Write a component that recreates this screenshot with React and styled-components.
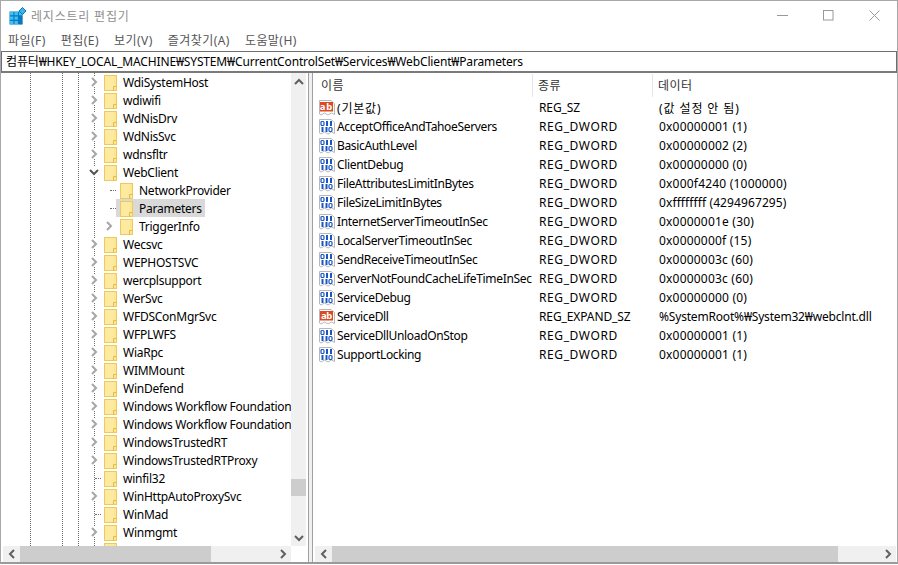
import styled, { createGlobalStyle } from "styled-components";

const GlobalStyle = createGlobalStyle`
  html, body {
    margin: 0;
    padding: 0;
    background: #fff;
    overflow: hidden;
  }
`;

const treeItems = [
  { name: "WdiSystemHost" },
  { name: "wdiwifi" },
  { name: "WdNisDrv" },
  { name: "WdNisSvc" },
  { name: "wdnsfltr" },
  { name: "WebClient", open: true },
  { name: "NetworkProvider", child: true, leaf: true },
  { name: "Parameters", child: true, leaf: true, selected: true },
  { name: "TriggerInfo", child: true },
  { name: "Wecsvc" },
  { name: "WEPHOSTSVC" },
  { name: "wercplsupport" },
  { name: "WerSvc" },
  { name: "WFDSConMgrSvc" },
  { name: "WFPLWFS" },
  { name: "WiaRpc" },
  { name: "WIMMount" },
  { name: "WinDefend" },
  { name: "Windows Workflow Foundation" },
  { name: "Windows Workflow Foundation" },
  { name: "WindowsTrustedRT" },
  { name: "WindowsTrustedRTProxy" },
  { name: "winfil32", leaf: true },
  { name: "WinHttpAutoProxySvc" },
  { name: "WinMad", leaf: true },
  { name: "Winmgmt" },
  { name: "" },
];

// kind, name, type, data, letter spacing of the data column
const values = [
  ["sz", "(기본값)", "REG_SZ", "(값 설정 안 됨)", 0.9],
  ["dword", "AcceptOfficeAndTahoeServers", "REG_DWORD", "0x00000001 (1)", 0.2],
  ["dword", "BasicAuthLevel", "REG_DWORD", "0x00000002 (2)", 0.2],
  ["dword", "ClientDebug", "REG_DWORD", "0x00000000 (0)", 0.2],
  ["dword", "FileAttributesLimitInBytes", "REG_DWORD", "0x000f4240 (1000000)", 0.2],
  ["dword", "FileSizeLimitInBytes", "REG_DWORD", "0xffffffff (4294967295)", 0.1],
  ["dword", "InternetServerTimeoutInSec", "REG_DWORD", "0x0000001e (30)", 0.2],
  ["dword", "LocalServerTimeoutInSec", "REG_DWORD", "0x0000000f (15)", 0.2],
  ["dword", "SendReceiveTimeoutInSec", "REG_DWORD", "0x0000003c (60)", 0.2],
  ["dword", "ServerNotFoundCacheLifeTimeInSec", "REG_DWORD", "0x0000003c (60)", 0.2],
  ["dword", "ServiceDebug", "REG_DWORD", "0x00000000 (0)", 0.2],
  ["sz", "ServiceDll", "REG_EXPAND_SZ", "%SystemRoot%₩System32₩webclnt.dll", -0.18],
  ["dword", "ServiceDllUnloadOnStop", "REG_DWORD", "0x00000001 (1)", 0.2],
  ["dword", "SupportLocking", "REG_DWORD", "0x00000001 (1)", 0.2],
];

const menus = ["파일(F)", "편집(E)", "보기(V)", "즐겨찾기(A)", "도움말(H)"];

const Chevron = ({ dir = "right", color = "#a6a6a6", size = 10 }) => {
  const points = {
    right: "3,1 7,5 3,9",
    left: "7,1 3,5 7,9",
    up: "1,7 5,3 9,7",
    down: "1,3 5,7 9,3",
  };
  return (
    <svg width={size} height={size} viewBox="0 0 10 10" fill="none">
      <polyline points={points[dir]} stroke={color} strokeWidth="2" />
    </svg>
  );
};

const Folder = () => (
  <svg width="13" height="16" viewBox="0 0 13 16">
    <rect x="0.5" y="0.5" width="12" height="15" fill="#fde68f" stroke="#ecca5c" />
    <rect x="1" y="1" width="9" height="14" fill="#fdeaa0" />
    <path d="M9.5 15.5V11.5H12.5" fill="none" stroke="#e5bd45" />
  </svg>
);

const AppIcon = () => (
  <svg width="18" height="18" viewBox="0 0 18 18">
    <rect x="0.5" y="4.5" width="13" height="13" fill="#0a78bd" />
    {[1, 5.5, 10].map((x) =>
      [5, 9.5, 14].map((y) => (
        <rect key={`${x}-${y}`} x={x} y={y} width="3.4" height="3.2" fill={x > 9 && y > 9 ? "#0a78bd" : "#3cc2f5"} />
      ))
    )}
    <path d="M13.5 0.5 L17 4 L13.5 7.5 L10 4 Z" fill="#3cb4ea" stroke="#0a78bd" />
  </svg>
);

const PageShape = () => (
  <path d="M0.5 0.5H12L15.5 3.5V14.5L12.5 13L9 15L5.5 13L2 15L0.5 14Z" fill="#fff" stroke="#b8b8b8" />
);

const StringIcon = () => (
  <svg width="16" height="16" viewBox="0 0 16 16">
    <PageShape />
    <rect x="1" y="2" width="13" height="9.5" fill="#dc4a24" />
    <text x="7.5" y="10" textAnchor="middle" fontFamily="Noto Sans, sans-serif" fontSize="9.5" fontWeight="700" fill="#fff">
      ab
    </text>
  </svg>
);

const Bit = ({ x, y, one }) =>
  one ? (
    <rect x={x + 0.5} y={y} width="2" height="5" fill="#1a55c4" />
  ) : (
    <rect x={x} y={y + 0.5} width="3" height="4" rx="1" fill="none" stroke="#1a55c4" strokeWidth="1.2" />
  );

const BinaryIcon = () => (
  <svg width="16" height="16" viewBox="0 0 16 16">
    <PageShape />
    <Bit x={2} y={2} />
    <Bit x={6.5} y={2} one />
    <Bit x={10.5} y={2} one />
    <Bit x={2} y={8} one />
    <Bit x={6} y={8} one />
    <Bit x={10} y={8} />
  </svg>
);

const App = () => (
  <>
    <GlobalStyle />
    <Window>
      <TitleBar>
        <AppIcon />
        <Title>레지스트리 편집기</Title>
        <WindowButtons>
          <WindowButton>
            <svg width="11" height="11" viewBox="0 0 11 11">
              <path d="M0 5.5H11" stroke="#999" />
            </svg>
          </WindowButton>
          <WindowButton>
            <svg width="11" height="11" viewBox="0 0 11 11">
              <rect x="0.5" y="0.5" width="9.5" height="9.5" fill="none" stroke="#999" />
            </svg>
          </WindowButton>
          <WindowButton>
            <svg width="11" height="11" viewBox="0 0 11 11">
              <path d="M0.5 0.5L10.5 10.5M10.5 0.5L0.5 10.5" stroke="#999" />
            </svg>
          </WindowButton>
        </WindowButtons>
      </TitleBar>

      <MenuBar>
        {menus.map((m) => (
          <MenuItem key={m}>{m}</MenuItem>
        ))}
      </MenuBar>

      <AddressBar>컴퓨터₩HKEY_LOCAL_MACHINE₩SYSTEM₩CurrentControlSet₩Services₩WebClient₩Parameters</AddressBar>

      <Panes>
        <TreePane>
          <PaneBody>
            <TreeList>
              {treeItems.map((item, i) => (
                <TreeRow key={i} $child={item.child}>
                  <Expander $leaf={item.leaf}>
                    {!item.leaf && item.name && (
                      <Chevron dir={item.open ? "down" : "right"} color={item.open ? "#555" : "#a6a6a6"} />
                    )}
                  </Expander>
                  <FolderLabel $selected={item.selected} $child={item.child}>
                    <Folder />
                    <span>{item.name}</span>
                  </FolderLabel>
                </TreeRow>
              ))}
            </TreeList>
            <VScroll>
              <ScrollButton>
                <Chevron dir="up" color="#606060" />
              </ScrollButton>
              <VTrack>
                <VThumb />
              </VTrack>
              <ScrollButton>
                <Chevron dir="down" color="#606060" />
              </ScrollButton>
            </VScroll>
          </PaneBody>
          <HScroll>
            <ScrollButton>
              <Chevron dir="left" color="#606060" />
            </ScrollButton>
            <HTrack>
              <HThumb $width={191} />
            </HTrack>
            <ScrollButton>
              <Chevron color="#606060" />
            </ScrollButton>
          </HScroll>
        </TreePane>

        <Splitter />

        <ListPane>
          <PaneBody>
            <ListArea>
              <ListHeader>
                <HeaderCell $width={220} $pad={8}>이름</HeaderCell>
                <HeaderCell $width={120} $pad={5}>종류</HeaderCell>
                <HeaderCell $last $pad={5}>데이터</HeaderCell>
              </ListHeader>
              {values.map(([kind, name, type, data, spacing]) => (
                <ValueRow key={name}>
                  <NameCell $korean={name.startsWith("(")}>
                    {kind === "sz" ? <StringIcon /> : <BinaryIcon />}
                    <span>{name}</span>
                  </NameCell>
                  <TypeCell $wide={type === "REG_DWORD"}>{type}</TypeCell>
                  <DataCell $spacing={spacing}>{data}</DataCell>
                </ValueRow>
              ))}
            </ListArea>
          </PaneBody>
          <HScroll>
            <ScrollButton>
              <Chevron dir="left" color="#606060" />
            </ScrollButton>
            <HTrack>
              <HThumb $width={506} />
            </HTrack>
            <ScrollButton>
              <Chevron color="#606060" />
            </ScrollButton>
          </HScroll>
        </ListPane>
      </Panes>
    </Window>
  </>
);

export default App;

const Window = styled.div`
  width: 898px;
  height: 564px;
  box-sizing: border-box;
  display: flex;
  flex-direction: column;
  background: #fff;
  border: 1px solid #a8a8a8;
  border-bottom: 2px solid #9a9a9a;
  font-family: "Noto Sans", "Noto Sans CJK KR", sans-serif;
  font-size: 12px;
  color: #000;
  overflow: hidden;
`;

const TitleBar = styled.div`
  height: 29px;
  flex: none;
  display: flex;
  align-items: center;
  padding-left: 8px;
  gap: 4px;
`;

const Title = styled.div`
  color: #8f8f8f;
  font-size: 12px;
  letter-spacing: 0.8px;
`;

const WindowButtons = styled.div`
  margin-left: auto;
  display: flex;
`;

const WindowButton = styled.div`
  width: 46px;
  height: 29px;
  display: flex;
  align-items: center;
  justify-content: center;
`;

const MenuBar = styled.div`
  height: 19px;
  padding-bottom: 2px;
  flex: none;
  display: flex;
  align-items: center;
  padding-left: 7px;
  gap: 15px;
  color: #555;
  font-size: 12px;
  letter-spacing: 0.45px;
`;

const MenuItem = styled.div`
  white-space: nowrap;
`;

const AddressBar = styled.div`
  height: 22px;
  flex: none;
  box-sizing: border-box;
  border: 1px solid #6e6e6e;
  border-bottom: 2px solid #7a7a7a;
  padding-left: 4px;
  line-height: 19px;
  letter-spacing: -0.15px;
  white-space: nowrap;
  overflow: hidden;
`;

const Panes = styled.div`
  flex: 1;
  min-height: 0;
  display: flex;
`;

const TreePane = styled.div`
  width: 308px;
  flex: none;
  box-sizing: border-box;
  padding-right: 2px;
  display: flex;
  flex-direction: column;
  border-right: 1px solid #a0a0a0;
`;

const Splitter = styled.div`
  width: 3px;
  flex: none;
  background: #f0f0f0;
`;

const ListPane = styled.div`
  flex: 1;
  min-width: 0;
  display: flex;
  flex-direction: column;
  border-left: 1px solid #a0a0a0;
`;

const PaneBody = styled.div`
  flex: 1;
  min-height: 0;
  display: flex;
`;

const TreeList = styled.div`
  flex: 1;
  min-width: 0;
  overflow: hidden;
  letter-spacing: -0.25px;
  background-image: repeating-linear-gradient(to bottom, #6f6f6f 0 1px, transparent 1px 2px),
    repeating-linear-gradient(to bottom, #6f6f6f 0 1px, transparent 1px 2px),
    repeating-linear-gradient(to bottom, #6f6f6f 0 1px, transparent 1px 2px),
    repeating-linear-gradient(to bottom, #6f6f6f 0 1px, transparent 1px 2px);
  background-size: 1px 100%;
  background-repeat: no-repeat;
  background-position: 29px 0, 61px 0, 77px 0, 93px 0;
`;

const TreeRow = styled.div`
  height: 18px;
  display: flex;
  align-items: center;
  padding-left: ${(p) => (p.$child ? "101px" : "86px")};
  white-space: nowrap;
`;

const Expander = styled.div`
  width: 14px;
  height: 18px;
  flex: none;
  display: flex;
  align-items: center;
  justify-content: center;
  position: relative;

  svg {
    background: #fff;
  }

  ${(p) =>
    p.$leaf &&
    `
    &::before {
      content: "";
      position: absolute;
      left: 8px;
      top: 9px;
      width: 6px;
      border-top: 1px dotted #6f6f6f;
    }
  `}
`;

const FolderLabel = styled.div`
  display: flex;
  align-items: center;
  height: 18px;
  gap: 6px;
  padding-right: 3px;
  padding-left: ${(p) => (p.$child ? "4px" : "3px")};
  background: ${(p) => (p.$selected ? "#d9d9d9" : "transparent")};

  svg {
    flex: none;
    margin-top: 2px;
  }
`;

const VScroll = styled.div`
  width: 15px;
  flex: none;
  display: flex;
  flex-direction: column;
  background: #f0f0f0;
`;

const ScrollButton = styled.div`
  width: 17px;
  height: 16px;
  flex: none;
  display: flex;
  align-items: center;
  justify-content: center;
  ${VScroll} & {
    width: 15px;
    height: 17px;
  }
`;

const VTrack = styled.div`
  flex: 1;
  display: flex;
  flex-direction: column;
  justify-content: flex-end;
  padding-bottom: 33px;
`;

const VThumb = styled.div`
  height: 17px;
  background: #cdcdcd;
`;

const HScroll = styled.div`
  height: 16px;
  flex: none;
  display: flex;
  background: #f0f0f0;
  margin-left: 2px;

  ${TreePane} & {
    margin-right: 15px;
  }
  ${ListPane} & {
    margin-right: 1px;
  }
`;

const HTrack = styled.div`
  flex: 1;
  min-width: 0;
  display: flex;
`;

const HThumb = styled.div`
  width: ${(p) => p.$width}px;
  background: #cdcdcd;
`;

const ListArea = styled.div`
  flex: 1;
  min-width: 0;
  overflow: hidden;
`;

const ListHeader = styled.div`
  height: 24px;
  padding-top: 1px;
  display: flex;
  align-items: flex-start;
  color: #333;
  letter-spacing: 0.5px;
`;

const HeaderCell = styled.div`
  box-sizing: border-box;
  height: 23px;
  line-height: 23px;
  padding-left: ${(p) => p.$pad}px;
  width: ${(p) => (p.$last ? "auto" : `${p.$width}px`)};
  flex: ${(p) => (p.$last ? 1 : "none")};
  border-right: ${(p) => (p.$last ? "none" : "1px solid #e5e5e5")};
`;

const ValueRow = styled.div`
  height: 19px;
  display: flex;
  align-items: center;
  white-space: nowrap;
`;

const NameCell = styled.div`
  width: 219px;
  flex: none;
  box-sizing: border-box;
  padding-left: 6px;
  display: flex;
  align-items: center;
  gap: 2px;
  overflow: hidden;
  letter-spacing: ${(p) => (p.$korean ? "0.8px" : "-0.34px")};

  svg {
    flex: none;
  }
`;

const TypeCell = styled.div`
  width: 120px;
  flex: none;
  box-sizing: border-box;
  padding-left: 7px;
  letter-spacing: ${(p) => (p.$wide ? "0.6px" : "-0.1px")};
`;

const DataCell = styled.div`
  flex: 1;
  padding-left: 7px;
  letter-spacing: ${(p) => p.$spacing}px;
`;
